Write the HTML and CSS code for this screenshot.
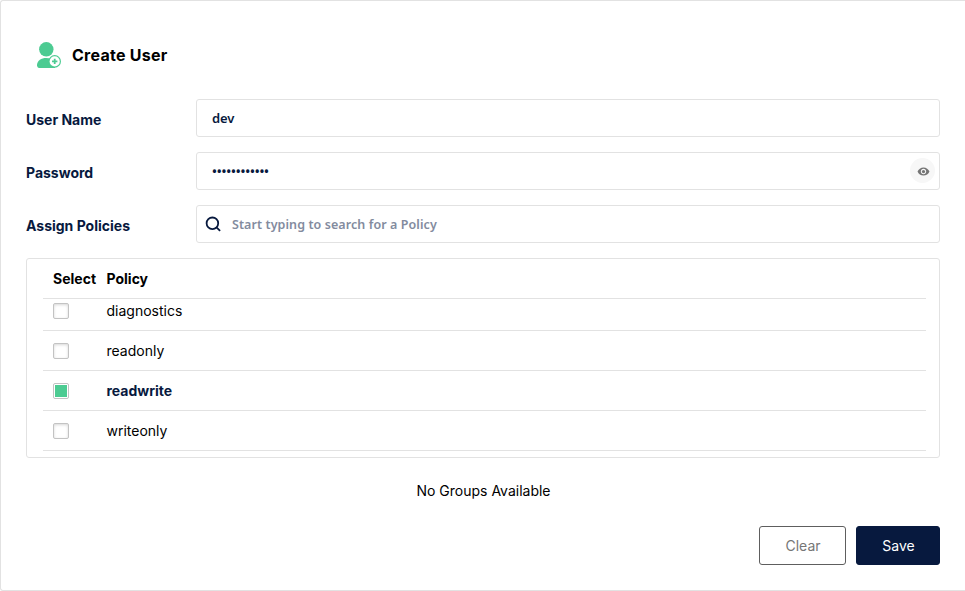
FILE: index.html
```html
<!DOCTYPE html>
<html lang="en">
<head>
<meta charset="utf-8">
<title>Create User</title>
<link rel="stylesheet" href="styles.css">
</head>
<body>
<main class="panel">
  <header class="title">
    <svg class="title-icon" viewBox="0 0 24 26">
      <circle cx="9.3" cy="7.3" r="7.2"/>
      <path d="M0 22.8C.4 18.5 4.200 16 9.200 16c3.800 0 6.300 1 8.400 3v7H2.200C.8 26-.1 24.500 0 22.800z"/>
      <path d="M12 26h6v-3h-6z"/>
      <circle cx="17.700" cy="19.400" r="6.300"/>
      <circle cx="17.700" cy="19.400" r="5.100" fill="#fff"/>
      <path d="M16.800 16.800h1.800v1.700h1.800v1.800h-1.800V22h-1.800v-1.700H15v-1.800h1.800z"/>
    </svg>
    <h1>Create User</h1>
  </header>
  <div class="field">
    <span class="label">User Name</span>
    <div class="input"><span class="value">dev</span></div>
  </div>
  <div class="field">
    <span class="label">Password</span>
    <div class="input">
      <span class="value dots">••••••••••••</span>
      <span class="eye"><svg viewBox="0 0 24 24"><path d="M12 4.500C7 4.500 2.730 7.610 1 12c1.730 4.390 6 7.500 11 7.500s9.270-3.110 11-7.500c-1.730-4.390-6-7.500-11-7.500zM12 17c-2.760 0-5-2.240-5-5s2.240-5 5-5 5 2.240 5 5-2.240 5-5 5zm0-8c-1.660 0-3 1.340-3 3s1.340 3 3 3 3-1.340 3-3-1.340-3-3-3z"/></svg></span>
    </div>
  </div>
  <div class="field">
    <span class="label">Assign Policies</span>
    <div class="input search">
      <svg class="search-icon" viewBox="0 0 16 16"><circle cx="7.400" cy="7.300" r="5.800"/><path d="M11.500 11.400l3.600 3.500"/></svg>
      <span class="placeholder">Start typing to search for a Policy</span>
    </div>
  </div>
  <section class="table">
    <div class="row head"><span class="select">Select</span><span>Policy</span></div>
    <div class="row first"><span class="select"><i class="check"></i></span><span>diagnostics</span></div>
    <div class="row"><span class="select"><i class="check"></i></span><span>readonly</span></div>
    <div class="row selected"><span class="select"><i class="check on"></i></span><span>readwrite</span></div>
    <div class="row"><span class="select"><i class="check"></i></span><span>writeonly</span></div>
  </section>
  <p class="empty">No Groups Available</p>
  <footer class="actions">
    <button class="btn clear">Clear</button>
    <button class="btn save">Save</button>
  </footer>
</main>
</body>
</html>
```
FILE: styles.css
```css
* { box-sizing: border-box; }
body {
  margin: 0;
  background: #fff;
  color: #000;
  font: 14px/20px Inter, sans-serif;
  overflow: hidden;
}
.panel {
  height: 591px;
  padding: 41px 25px 0;
  border: 1px solid #e2e2e2;
  border-right: 0;
  border-radius: 3px 0 0 3px;
}
.title {
  display: flex;
  align-items: center;
  height: 26px;
  margin: 0 0 31px 11px;
}
.title-icon { width: 24px; height: 26px; margin-right: 11px; fill: #4ccb92; }
h1 { margin: 0; font-size: 16px; font-weight: 700; line-height: 26px; letter-spacing: 0.25px; }
.field { display: flex; align-items: center; height: 38px; margin-bottom: 15px; }
.label { width: 170px; padding-top: 3px; color: #07193e; font-weight: 700; }
.input {
  flex: 1;
  display: flex;
  align-items: center;
  height: 38px;
  padding: 0 4px 0 15px;
  border: 1px solid #e2e2e2;
  border-radius: 3px;
  color: #07193e;
  font: 600 13px/18px "Noto Sans", sans-serif;
}
.value { letter-spacing: -0.1px; }
.dots { letter-spacing: -0.15px; }
.eye {
  display: flex;
  align-items: center;
  justify-content: center;
  width: 25px;
  height: 25px;
  margin: 0 0 1px auto;
  border-radius: 50%;
  background: #f7f7f7;
}
.eye svg { width: 13px; height: 13px; margin: 1px 0 0 1px; fill: #757575; }
.search { padding-left: 8px; }
.search-icon {
  width: 16px;
  height: 16px;
  margin-right: 11px;
  fill: none;
  stroke: #07193e;
  stroke-width: 1.8;
}
.placeholder { padding-top: 1px; color: #838b9e; font-size: 12.5px; letter-spacing: 0.08px; }
.table {
  height: 200px;
  padding: 0 13px 0 16px;
  border: 1px solid #e2e2e2;
  border-radius: 3px;
}
.row {
  display: flex;
  align-items: center;
  height: 40px;
  padding-left: 10px;
  border-bottom: 1px solid #e2e2e2;
}
.select { width: 53.500px; }
.head { font-weight: 700; }
.first { height: 32px; padding-bottom: 7px; }
.selected { color: #07193e; font-weight: 700; }
.check {
  display: block;
  width: 16px;
  height: 16px;
  border: 1px solid #c3c3c3;
  border-radius: 2px;
  box-shadow: inset 0 1px 3px rgba(0, 0, 0, .16);
}
.on { padding: 1px; background: #4ccb92 content-box; box-shadow: none; }
.empty { margin: 23px 0 0 1px; text-align: center; }
.actions { display: flex; justify-content: flex-end; gap: 10px; margin-top: 25px; }
.btn {
  height: 39px;
  padding: 0 0 0 1px;
  border: 1px solid #5e5e5e;
  border-radius: 3px;
  background: #fff;
  color: #767676;
  font: 14px/20px Inter, sans-serif;
}
.clear { width: 87px; }
.save { width: 84px; border-color: #07193e; background: #07193e; color: #fff; }
```
